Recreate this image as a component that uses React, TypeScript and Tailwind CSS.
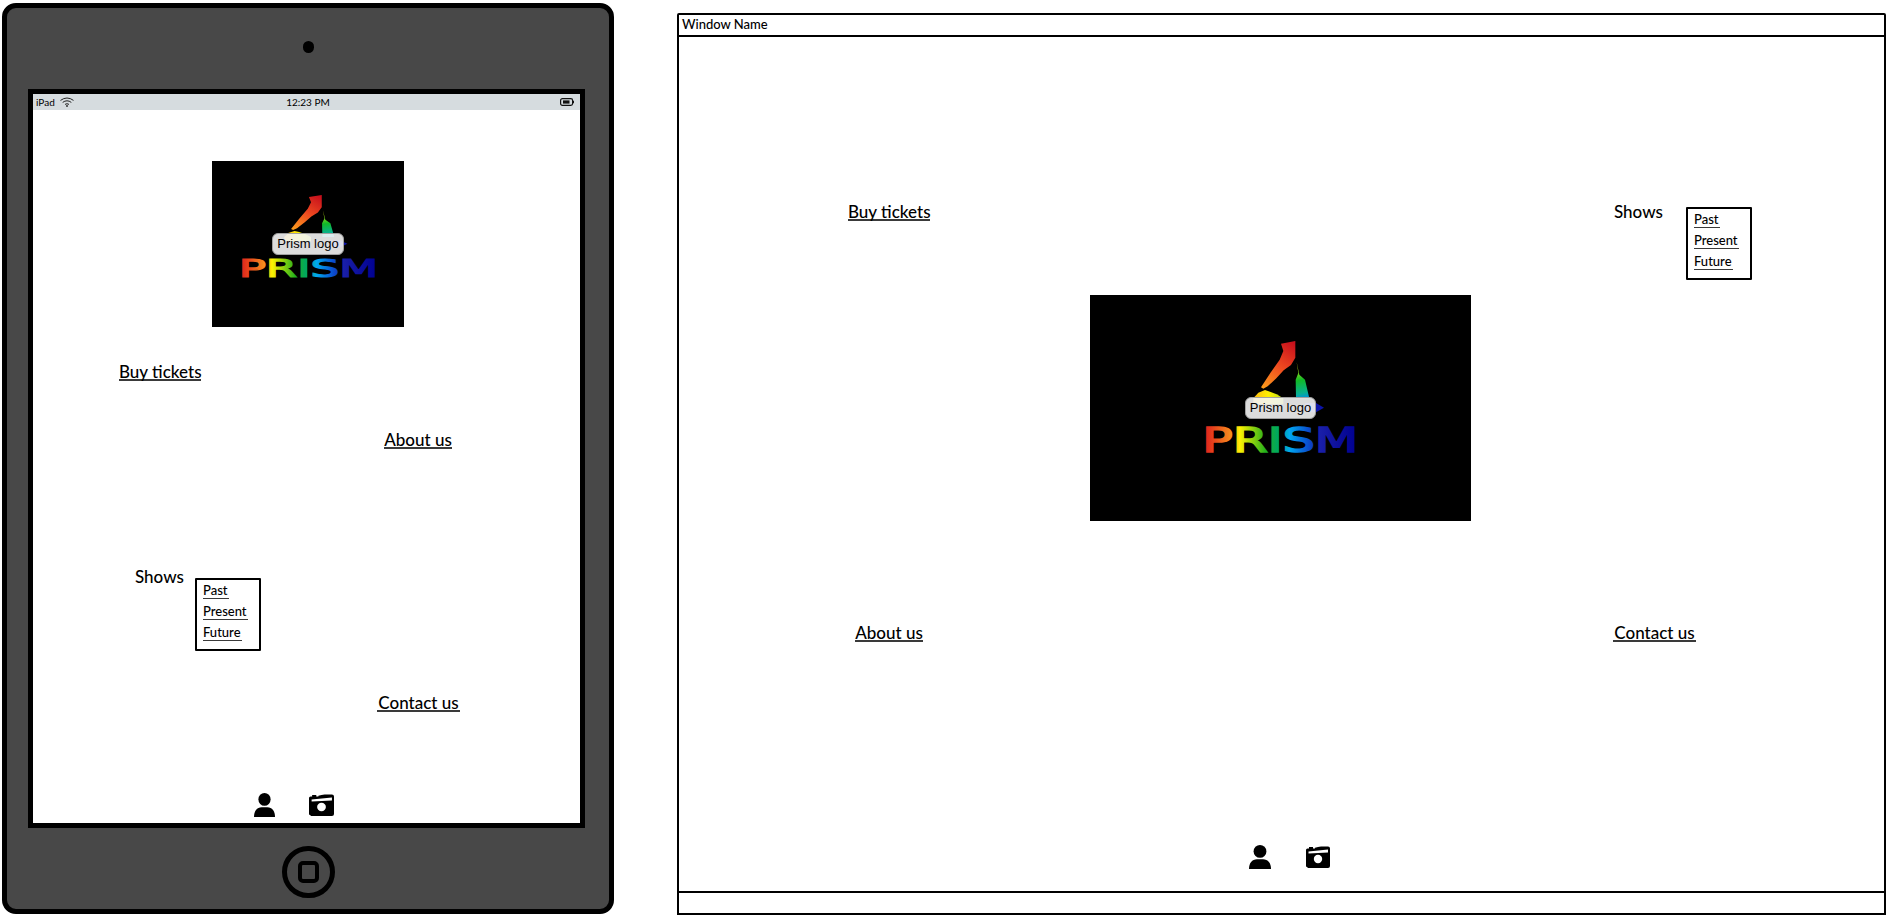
import React from "react";

function LinkText({ label, className }: { label: string; className: string }) {
  return (
    <a className={`block h-[20px] shrink-0 whitespace-nowrap border-b-2 border-[#3a3a3a] text-center text-[17px] font-medium leading-[21px] text-black ${className}`}>
      {label}
    </a>
  );
}

function Shows({ labelWidth, boxOffset }: { labelWidth: string; boxOffset: string }) {
  return (
    <>
      <span className={`shrink-0 text-[17px] font-medium leading-[22px] ${labelWidth}`}>Shows</span>
      <div className={`flex h-[73px] w-[66px] shrink-0 flex-col gap-[4px] rounded-[1px] border-2 border-black pl-[6px] pt-[2px] text-[13px] font-medium leading-[16px] ${boxOffset}`}>
        <a className="w-fit border-b border-[#3a3a3a] pr-px">Past</a>
        <a className="w-fit border-b border-[#3a3a3a] pr-px">Present</a>
        <a className="w-fit border-b border-[#3a3a3a] pr-px">Future</a>
      </div>
    </>
  );
}

function PersonIcon({ className }: { className: string }) {
  return (
    <svg viewBox="0 0 22 24" preserveAspectRatio="none" className={`shrink-0 ${className}`}>
      <ellipse cx="11" cy="6.4" rx="6.4" ry="6.4" fill="#000" />
      <path d="M0 24 C0 18 3 14.2 8 14.2 L14 14.2 C19 14.2 22 18 22 24 Z" fill="#000" />
    </svg>
  );
}

function CameraIcon({ className }: { className: string }) {
  return (
    <svg viewBox="0 0 24 22" preserveAspectRatio="none" className={`shrink-0 ${className}`}>
      <path d="M1 21 Q0 21 0 20 L0 4 Q0 2.5 1.5 2.5 L3 2.5 L3 1 L7 1 L7 2.5 L9 2.5 L9 1.8 Q12 0.6 15 0.4 L22 0.4 Q24 0.4 24 2.4 L24 20 Q24 22 22 22 L2 22 Z" fill="#000" />
      <path d="M2.5 5.5 L22 3.6 L22 6.6 L2.5 7.6 Z" fill="#fff" />
      <circle cx="12" cy="13" r="4.2" fill="#fff" />
    </svg>
  );
}

function LogoArt({ id, className }: { id: string; className: string }) {
  return (
    <svg viewBox="0 0 453 336" preserveAspectRatio="none" className={`overflow-visible ${className}`}>
      <defs>
        <linearGradient id={`${id}-text`} gradientUnits="userSpaceOnUse" x1="0" y1="0" x2="453" y2="0">
          <stop offset="0" stopColor="#e0201c" />
          <stop offset="0.18" stopColor="#f7931e" />
          <stop offset="0.23" stopColor="#fff200" />
          <stop offset="0.4" stopColor="#22b11c" />
          <stop offset="0.48" stopColor="#00a860" />
          <stop offset="0.56" stopColor="#00a8f0" />
          <stop offset="0.68" stopColor="#0a50d0" />
          <stop offset="0.76" stopColor="#1a1fa8" />
          <stop offset="1" stopColor="#000090" />
        </linearGradient>
        <linearGradient id={`${id}-red`} gradientUnits="userSpaceOnUse" x1="270" y1="10" x2="175" y2="140">
          <stop offset="0" stopColor="#c8101c" />
          <stop offset="0.5" stopColor="#ee4a20" />
          <stop offset="1" stopColor="#fb9a1c" />
        </linearGradient>
        <linearGradient id={`${id}-green`} gradientUnits="userSpaceOnUse" x1="275" y1="64" x2="295" y2="172">
          <stop offset="0" stopColor="#f0f010" />
          <stop offset="0.2" stopColor="#a0dc18" />
          <stop offset="0.5" stopColor="#10b828" />
          <stop offset="0.85" stopColor="#08b090" />
          <stop offset="1" stopColor="#0090d8" />
        </linearGradient>
        <linearGradient id={`${id}-yellow`} gradientUnits="userSpaceOnUse" x1="145" y1="170" x2="235" y2="170">
          <stop offset="0" stopColor="#fdb813" />
          <stop offset="0.5" stopColor="#fff000" />
          <stop offset="1" stopColor="#b8dc18" />
        </linearGradient>
      </defs>
      <path d="M228 8 L271 0 L271 50 L258 72 L236 88 L214 112 L188 136 L175 143 L168 139 L196 96 L224 56 L235 30 Z" fill={`url(#${id}-red)`} />
      <path d="M275 64 L283 101 L300 116 L313 172 L273 172 L272 116 L280 96 Z" fill={`url(#${id}-green)`} />
      <path d="M145 172 L160 155 L180 147 L195 152 L215 160 L235 172 L235 190 L145 190 Z" fill={`url(#${id}-yellow)`} />
      <path d="M300 186 L333 186 L357 200 L333 214 L300 214 Z" fill="#0c14a8" />
      <text
        x="-8"
        y="334"
        textLength="468"
        lengthAdjust="spacingAndGlyphs"
        fontSize="100"
        fontWeight="400"
        fontFamily="'DejaVu Sans', sans-serif"
        fill={`url(#${id}-text)`}
        stroke={`url(#${id}-text)`}
        strokeWidth="5"
      >
        PRISM
      </text>
    </svg>
  );
}

function StatusBar() {
  return (
    <div className="flex h-[16px] items-center bg-[#d6dcdf] pl-[3px] pr-[6px] text-[10px] leading-[16px] text-black">
      <span className="w-[24px]">iPad</span>
      <svg viewBox="0 0 14 10" className="h-[10px] w-[14px]" fill="none" stroke="#222" strokeWidth="1">
        <path d="M0.5 3.4 Q7 -1.4 13.5 3.4" />
        <path d="M2.7 5.4 Q7 2.2 11.3 5.4" />
        <path d="M5 7.4 Q7 6 9 7.4" />
        <circle cx="7" cy="9" r="0.9" fill="#222" stroke="none" />
      </svg>
      <span className="flex-1 pr-[18px] text-center">12:23 PM</span>
      <svg viewBox="0 0 14 8" className="h-[8px] w-[14px]" fill="none">
        <rect x="0.6" y="0.6" width="12" height="6.8" rx="1.8" stroke="#111" strokeWidth="1.2" />
        <rect x="3" y="2.4" width="6.5" height="3.2" fill="#111" />
        <rect x="13" y="2.8" width="1" height="2.4" fill="#111" />
      </svg>
    </div>
  );
}

export default function App() {
  return (
    <div className="flex h-[916px] w-[1886px] items-start overflow-hidden bg-white pl-[2px] pt-[3px] font-['Lato',sans-serif] text-black">
      {/* iPad */}
      <div className="flex h-[911px] w-[612px] shrink-0 flex-col rounded-[14px] border-[5px] border-black bg-[#484848]">
        <div className="mt-[33px] h-[12px] w-[11px] self-center rounded-full bg-black" />
        <div className="ml-[21px] mt-[36px] flex h-[739px] w-[557px] flex-col border-[5px] border-black bg-white">
          <StatusBar />
          <div className="flex flex-1 flex-col items-start overflow-hidden">
            <div className="relative ml-[179px] mt-[51px] flex h-[166px] w-[192px] shrink-0 justify-center bg-black pt-[34px]">
              <LogoArt id="small" className="h-[82px] w-[135px]" />
              <div className="absolute left-[60px] top-[72px] h-[22px] w-[72px] rounded-[6px] border border-[#a0a0a0] bg-[#f4f4f4]/90 text-center font-['Liberation_Sans',sans-serif] text-[13px] leading-[20px] text-black">
                Prism logo
              </div>
            </div>
            <LinkText label="Buy tickets" className="ml-[86px] mt-[34px] w-[82px]" />
            <LinkText label="About us" className="ml-[351px] mt-[48px] w-[68px]" />
            <div className="ml-[102px] mt-[117px] flex items-start">
              <Shows labelWidth="w-[60px]" boxOffset="mt-[12px]" />
            </div>
            <LinkText label="Contact us" className="ml-[344px] mt-[41px] w-[83px]" />
            <div className="ml-[221px] mt-[81px] flex items-start gap-[34px]">
              <PersonIcon className="h-[24px] w-[21px]" />
              <CameraIcon className="mt-px h-[22px] w-[25px]" />
            </div>
          </div>
        </div>
        <div className="mt-[18px] flex h-[52px] w-[53px] items-center justify-center self-center rounded-full border-[5px] border-black">
          <div className="h-[22px] w-[21px] rounded-[5px] border-[4px] border-black" />
        </div>
      </div>

      {/* Window */}
      <div className="ml-[63px] mt-[10px] flex h-[902px] w-[1209px] shrink-0 flex-col rounded-t-[2px] border-2 border-black bg-white">
        <div className="h-[22px] border-b-2 border-black pl-[3px] text-[13px] font-medium leading-[18px]">Window Name</div>
        <div className="flex flex-1 flex-col items-start overflow-hidden">
          <div className="ml-[169px] mt-[164px] flex items-start">
            <LinkText label="Buy tickets" className="w-[82px]" />
            <div className="ml-[684px] flex items-start">
              <Shows labelWidth="w-[72px]" boxOffset="mt-[6px]" />
            </div>
          </div>
          <div className="relative ml-[411px] mt-[15px] flex h-[226px] w-[381px] shrink-0 justify-center bg-black pt-[46px]">
            <LogoArt id="big" className="h-[112px] w-[151px]" />
            <div className="absolute left-[155px] top-[102px] h-[22px] w-[71px] rounded-[6px] border border-[#a0a0a0] bg-[#f4f4f4]/90 text-center font-['Liberation_Sans',sans-serif] text-[13px] leading-[20px] text-black">
              Prism logo
            </div>
          </div>
          <div className="ml-[176px] mt-[101px] flex items-start gap-[690px]">
            <LinkText label="About us" className="w-[68px]" />
            <LinkText label="Contact us" className="w-[83px]" />
          </div>
          <div className="ml-[570px] mt-[203px] flex items-start gap-[35px]">
            <PersonIcon className="h-[24px] w-[22px]" />
            <CameraIcon className="mt-px h-[22px] w-[24px]" />
          </div>
        </div>
        <div className="h-[22px] border-t-2 border-black" />
      </div>
    </div>
  );
}
